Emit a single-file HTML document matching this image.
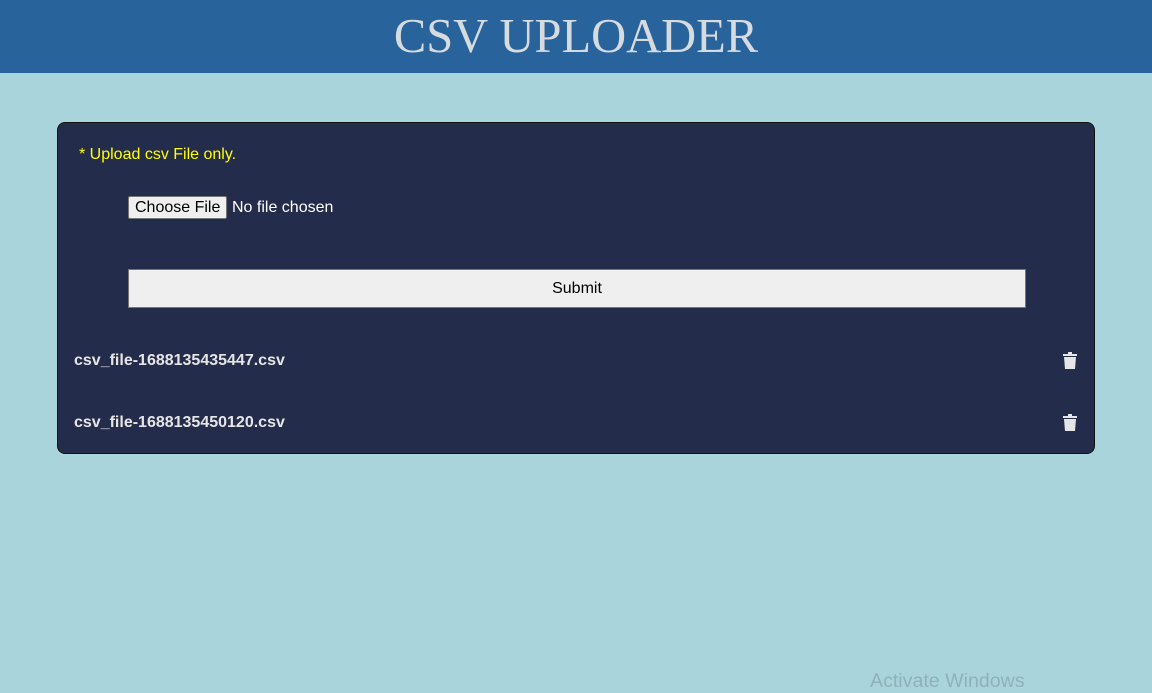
<!DOCTYPE html>
<html><head><style>
body{margin:0;width:1152px;height:690px;background:#a9d4db;font-family:"Liberation Sans",sans-serif;position:relative;overflow:hidden}
.hdr{position:absolute;left:0;top:0;width:1152px;height:73px;background:#28639c;color:#d6dbe0;font-family:"Liberation Serif",serif;font-size:48.5px;text-align:center;line-height:73px}
.card{position:absolute;left:57px;top:122px;width:1036px;height:330px;background:#242c4b;border:1px solid #111;border-radius:8px}
.note{position:absolute;left:21px;top:23px;color:#ffff00;font-size:16px}
.cf{position:absolute;left:70px;top:73px;background:#efefef;border:1px solid #767676;font-size:16px;padding:0 6px;height:21px;line-height:21px;color:#000;border-radius:2px}
.nf{position:absolute;left:174px;top:76px;color:#fff;font-size:16px}
.sub{position:absolute;left:70px;top:146px;width:896px;height:37px;background:#efefef;border:1px solid #767676;text-align:center;line-height:37px;font-size:16px;color:#000}
.f{position:absolute;left:16px;color:#e6e6e6;font-weight:bold;font-size:16px}
.t{position:absolute;left:1004px}
.act{position:absolute;left:870px;top:670px;color:#8fb2b8;font-size:19.6px}
</style></head><body>
<div class="hdr">CSV UPLOADER</div>
<div class="card">
<div class="note">* Upload csv File only.</div>
<div class="cf">Choose File</div><div class="nf">No file chosen</div>
<div class="sub">Submit</div>
<div class="f" style="top:229px">csv_file-1688135435447.csv</div>
<div class="f" style="top:291px">csv_file-1688135450120.csv</div>
<svg class="t" style="top:229px" width="16" height="18" viewBox="0 0 16 18"><rect x="1" y="2" width="14" height="2" fill="#e6e6e6"/><rect x="6" y="0" width="4" height="2" fill="#e6e6e6"/><path d="M2 5h12l-1 12H3z" fill="#e6e6e6"/></svg>
<svg class="t" style="top:291px" width="16" height="18" viewBox="0 0 16 18"><rect x="1" y="2" width="14" height="2" fill="#e6e6e6"/><rect x="6" y="0" width="4" height="2" fill="#e6e6e6"/><path d="M2 5h12l-1 12H3z" fill="#e6e6e6"/></svg>
</div>
<div class="act">Activate Windows</div>
</body></html>
